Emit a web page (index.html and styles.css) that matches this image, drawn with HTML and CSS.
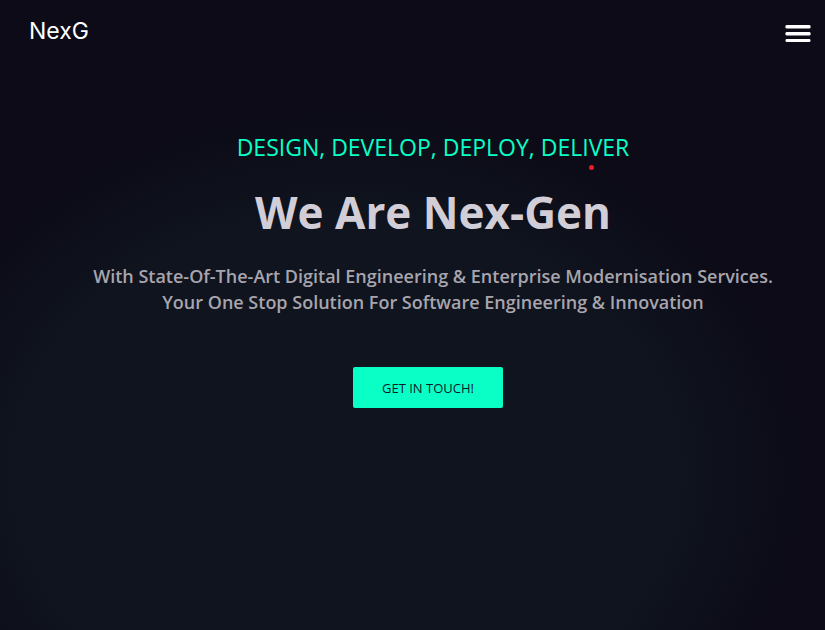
FILE: index.html
```html
<!DOCTYPE html>
<html lang="en">
<head>
  <meta charset="utf-8">
  <meta name="viewport" content="width=device-width, initial-scale=1">
  <title>NexG</title>
  <link rel="stylesheet" href="styles.css">
</head>
<body>
  <header class="header">
    <a class="logo" href="#">NexG</a>
    <button class="menu" type="button" aria-label="Open menu">
      <svg viewBox="0 0 26 18" width="26" height="18" fill="#fff" aria-hidden="true">
        <rect x=".5" width="25" height="3.5" rx="1.3"/>
        <rect x=".5" y="7" width="25" height="3.5" rx="1.3"/>
        <rect x=".5" y="14" width="25" height="3" rx="1.3"/>
      </svg>
    </button>
  </header>
  <main class="hero">
    <p class="tagline">DESIGN, DEVELOP, DEPLOY, DELIVER<span class="dot"></span></p>
    <h1 class="title">We Are Nex-Gen</h1>
    <p class="lead">With State-Of-The-Art Digital Engineering &amp; Enterprise Modernisation Services.<br>Your One Stop Solution For Software Engineering &amp; Innovation</p>
    <button class="cta" type="button">GET IN TOUCH!</button>
  </main>
</body>
</html>
```
FILE: styles.css
```css
* {
  box-sizing: border-box;
}

body {
  margin: 0;
  min-height: 100vh;
  background: radial-gradient(ellipse 56% 58% at 42% 75%, #0f141e 0%, #0f141e 70%, #0c0b17 100%) #0c0b17;
  font-family: "Open Sans", "Noto Sans", sans-serif;
}

.header {
  display: flex;
  align-items: center;
  justify-content: space-between;
  height: 62px;
  padding: 0 14px 0 29px;
}

.logo {
  color: #fff;
  font-family: Inter, sans-serif;
  font-size: 23px;
  line-height: 32px;
  text-decoration: none;
}

.menu {
  display: flex;
  padding: 6px 0 0;
  border: 0;
  background: none;
  cursor: pointer;
}

.hero {
  display: flex;
  flex-direction: column;
  align-items: center;
  padding: 69px 20px 48px 61px;
  text-align: center;
}

.tagline {
  position: relative;
  margin: 0;
  color: #0affc6;
  font-size: 23px;
  line-height: 32px;
}

.dot {
  position: absolute;
  right: 35px;
  bottom: -7px;
  width: 5px;
  height: 5px;
  border-radius: 50%;
  background: #ed1c24;
}

.title {
  margin: 20px 0 0;
  color: #d2ced7;
  font-size: 44px;
  font-weight: 700;
  line-height: 58px;
}

.lead {
  margin: 22px 0 0;
  color: #a8a5ae;
  font-size: 18px;
  font-weight: 600;
  line-height: 26px;
}

.cta {
  width: 150px;
  height: 41px;
  margin: 52px 10px 0 0;
  border: 0;
  border-radius: 2px;
  background: #0affc6;
  color: #0d1b2a;
  font: 13px "Open Sans", "Noto Sans", sans-serif;
  cursor: pointer;
}
```
